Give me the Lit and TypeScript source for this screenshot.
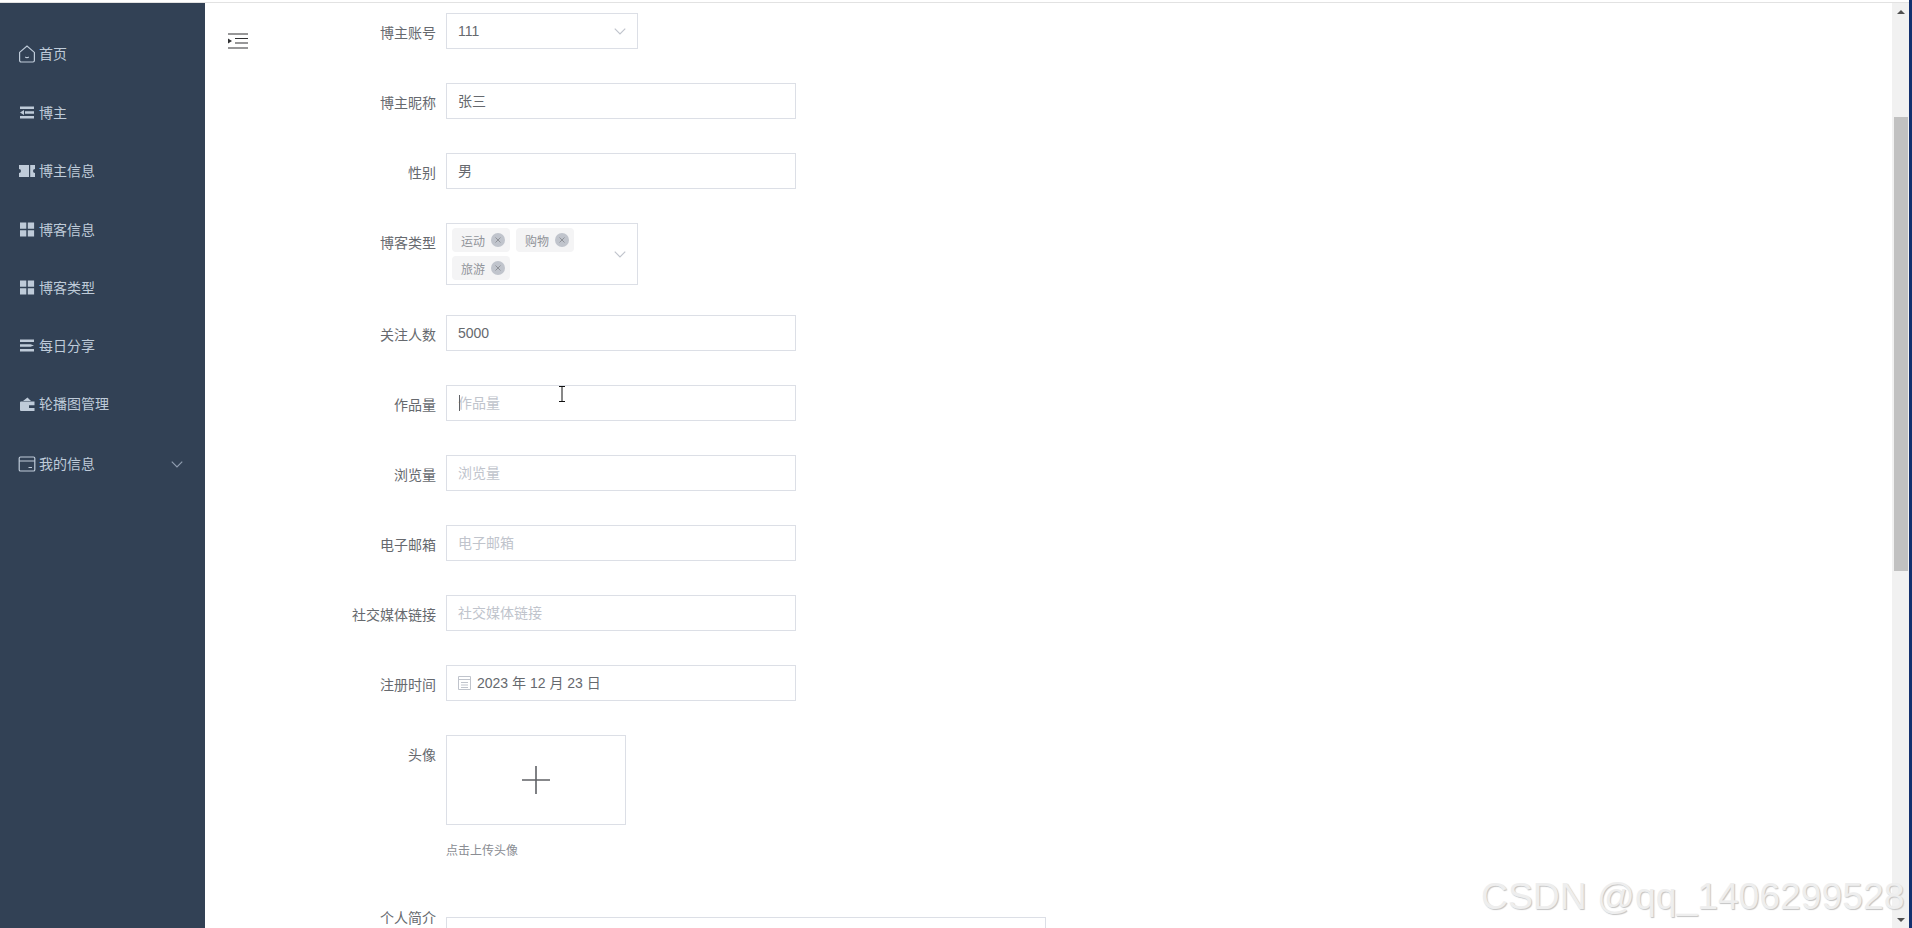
import { LitElement, html, css, svg } from "lit";
import { customElement } from "lit/decorators.js";

const stroke = (d: string) => svg`<path d=${d} fill="none" stroke="currentColor" stroke-width="1.2"/>`;
const fill = (d: string) => svg`<path d=${d} fill="currentColor"/>`;

const icons: Record<string, unknown> = {
  home: svg`${stroke("M1.6 7.4 9 1l7.4 6.4v8.2a1.4 1.4 0 0 1-1.4 1.4H3a1.4 1.4 0 0 1-1.4-1.4z")}${stroke("M7.2 12q1.8 1.3 3.6 0")}`,
  unfold: fill("M2 2.5h14v2.6H2zM7 7.2h9v2.6H7zM2 11.9h14v2.6H2zM2 8.5l4-2.4v4.8z"),
  ticket: fill("M1 3h16v4a2 2 0 0 0 0 4v4H1v-4a2 2 0 0 0 0-4zM11 3v12h1.2V3z"),
  grid: fill("M2 1.5h6.3v6.3H2zM9.8 1.5h6.3v6.3H9.8zM2 9.3h6.3v6.3H2zM9.8 9.3h6.3v6.3H9.8z"),
  operation: fill("M2 2.5h14v2.6H2zM2 7.2h10.5l3.5 1.3-3.5 1.3H2zM2 11.9h14v2.6H2z"),
  wallet: svg`<path fill-rule="evenodd" fill="currentColor" d="M2 7.5q0-1 1-1h13.500v9.500H3q-1 0-1-1zM5 6l4.500-3.500 2.500 2.500 1 1zM11 10.200h5.500v2.800H11z"/>`,
  card: svg`<rect x="1.2" y="2" width="15.6" height="14" rx="1.300" fill="none" stroke="currentColor" stroke-width="1.200"/>${stroke("M1.200 6h15.600M10.500 12.500h3.500")}`,
};

const menu = [
  { icon: "home", label: "首页" },
  { icon: "unfold", label: "博主" },
  { icon: "ticket", label: "博主信息" },
  { icon: "grid", label: "博客信息" },
  { icon: "grid", label: "博客类型" },
  { icon: "operation", label: "每日分享" },
  { icon: "wallet", label: "轮播图管理" },
  { icon: "card", label: "我的信息", arrow: true },
];

const chevron = svg`<svg class="chev" viewBox="0 0 12 12"><path d="M1.500 4 6 8.500 10.500 4" fill="none" stroke="currentColor" stroke-width="1"/></svg>`;

@customElement("app-root")
export class AppRoot extends LitElement {
  static styles = css`
    :host {
      display: block;
      height: 928px;
      overflow: hidden;
      background: #fff;
      font-family: "Liberation Sans", "Noto Sans CJK SC", sans-serif;
      font-size: 14px;
      color: #66696e;
      position: relative;
    }
    .shell { display: flex; height: 928px; }
    .page { flex: 1; display: flex; flex-direction: column; min-width: 0; }
    .topline { height: 2px; flex: none; background: #fff; border-bottom: 1px solid #e2e2e2; }
    .body { flex: 1; display: flex; min-height: 0; overflow: hidden; }
    .side { width: 205px; flex: none; background: #324155; color: #bfcbd9; padding-top: 22px; box-sizing: border-box; }
    .item { height: 58px; display: flex; align-items: center; padding: 0 20px 0 18px; gap: 3px; }
    .item:nth-child(2) { margin-top: 1px; }
    .item:nth-child(4) { margin-top: 1px; }
    .item:nth-child(8) { margin-top: 2px; }
    .item svg.ic { width: 18px; height: 18px; flex: none; }
    .item .lab { flex: 1; line-height: 20px; }
    .chev { width: 14px; height: 14px; display: block; flex: none; }
    .item .chev { color: #909db0; margin-right: 1px; }
    .main { flex: 1; display: flex; min-width: 0; }
    .fold { width: 135px; flex: none; padding: 30px 0 0 23px; box-sizing: border-box; }
    .fold svg { display: block; width: 20px; height: 16px; }
    .form { flex: 1; padding-top: 9px; }
    .row { display: flex; margin-bottom: 33px; }
    .row.tight { margin-bottom: 29px; }
    .row.up { margin-bottom: 48px; }
    .name { width: 96px; flex: none; text-align: right; line-height: 20px; padding-top: 11px; margin-right: 10px; white-space: nowrap; }
    .field {
      box-sizing: border-box; height: 36px; width: 350px; border: 1px solid #dcdfe6;
      display: flex; align-items: center; padding: 0 11px; line-height: 20px; position: relative; flex: none; margin-top: 1px;
    }
    .field.sel { width: 192px; justify-content: space-between; padding-right: 10px; }
    .field .chev, .tags .chev { color: #c0c4cc; }
    .ph { color: #c0c4cc; }
    .caret { position: absolute; left: 12px; top: 9px; width: 1px; height: 16px; background: #606266; }
    .ibeam { position: absolute; left: 111px; top: 0; width: 8px; height: 16px; display: block; color: #111; }
    .tags { box-sizing: border-box; height: 62px; width: 192px; border: 1px solid #dcdfe6; display: flex; align-items: center; flex: none; margin-top: 1px; padding: 0 10px 0 5px; justify-content: space-between; }
    .taglist { display: flex; flex-wrap: wrap; gap: 4px 6px; width: 135px; }
    .tag { box-sizing: border-box; width: 58px; height: 24px; background: #f4f4f5; border-radius: 4px; color: #909399; font-size: 12px; display: flex; align-items: center; padding-left: 9px; gap: 6px; }
    .x { width: 14px; height: 14px; display: block; }
    .date { padding-left: 11px; gap: 6px; }
    .date svg { width: 13px; height: 14px; color: #c0c4cc; display: block; flex: none; }
    .upcol { flex: none; margin-top: 1px; }
    .upload { box-sizing: border-box; width: 180px; height: 90px; border: 1px solid #dcdfe6; display: flex; align-items: center; justify-content: center; color: #606266; }
    .upload svg { width: 28px; height: 28px; display: block; }
    .hint { font-size: 12px; color: #8a8d93; line-height: 17px; margin-top: 18px; }
    .area { box-sizing: border-box; width: 600px; height: 120px; border: 1px solid #dcdfe6; margin-top: 9px; flex: none; }
    .name.top { padding-top: 0; }
    .sb { width: 17px; flex: none; background: #f1f1f1; display: flex; flex-direction: column; align-items: center; height: 925px; }
    .sb .up-arrow { margin-top: 7px; width: 0; height: 0; border-left: 4px solid transparent; border-right: 4px solid transparent; border-bottom: 4px solid #505050; }
    .sb .thumb { width: 14px; height: 454px; background: #c1c1c1; margin-top: 103px; }
    .sb .spacer { flex: 1; }
    .sb .down-arrow { margin-bottom: 6px; width: 0; height: 0; border-left: 4px solid transparent; border-right: 4px solid transparent; border-top: 4px solid #505050; }
    .edge { width: 3px; flex: none; background: #12306f; }
    .wm {
      position: absolute; left: 1481px; top: 873px; font-size: 37.3px; line-height: 46px; white-space: nowrap;
      font-family: "Liberation Sans", sans-serif; color: #eeeeee; text-shadow: 1px 1px 1px #c4c4c4;
    }
  `;

  private rowField(label: string, value: string, ph = false, extra: unknown = null) {
    return html`<div class="row">
      <div class="name">${label}</div>
      <div class="field"><span class=${ph ? "ph" : ""}>${value}</span>${extra}</div>
    </div>`;
  }

  private tag(t: string) {
    return html`<div class="tag">${t}
      <svg class="x" viewBox="0 0 14 14"><circle cx="7" cy="7" r="7" fill="#c0c4cc"/><path d="M4.500 4.500l5 5m0-5-5 5" stroke="#8f9298" stroke-width="1"/></svg>
    </div>`;
  }

  render() {
    return html`<div class="shell">
      <div class="page">
        <div class="topline"></div>
        <div class="body">
          <nav class="side">
            ${menu.map(
              (m) => html`<div class="item">
                <svg class="ic" viewBox="0 0 18 18">${icons[m.icon]}</svg>
                <span class="lab">${m.label}</span>
                ${m.arrow ? chevron : null}
              </div>`
            )}
          </nav>
          <div class="main">
            <div class="fold">
              <svg viewBox="0 0 20 16">
                <path d="M0 1h20M7 5.500h13M7 10h13M0 15h20" stroke="#303133" stroke-width="1.200" fill="none"/>
                <path d="M0 5.500l4 2.500-4 2.500z" fill="#303133"/>
              </svg>
            </div>
            <div class="form">
              <div class="row">
                <div class="name">博主账号</div>
                <div class="field sel"><span>111</span>${chevron}</div>
              </div>
              ${this.rowField("博主昵称", "张三")}
              ${this.rowField("性别", "男")}
              <div class="row tight">
                <div class="name">博客类型</div>
                <div class="tags">
                  <div class="taglist">${["运动", "购物", "旅游"].map((t) => this.tag(t))}</div>
                  ${chevron}
                </div>
              </div>
              ${this.rowField("关注人数", "5000")}
              ${this.rowField(
                "作品量",
                "作品量",
                true,
                html`<i class="caret"></i>
                  <svg class="ibeam" viewBox="0 0 8 16"><path d="M1 .5h6M4 .5v15M1 15.500h6" stroke="currentColor" fill="none"/></svg>`
              )}
              ${this.rowField("浏览量", "浏览量", true)}
              ${this.rowField("电子邮箱", "电子邮箱", true)}
              ${this.rowField("社交媒体链接", "社交媒体链接", true)}
              <div class="row">
                <div class="name">注册时间</div>
                <div class="field date">
                  <svg viewBox="0 0 13 14"><path d="M.5 .5h12v13H.5zM.5 3.500h12M3 6.500h7M3 9h7M3 11.500h7" fill="none" stroke="currentColor"/></svg>
                  <span>2023 年 12 月 23 日</span>
                </div>
              </div>
              <div class="row up">
                <div class="name">头像</div>
                <div class="upcol">
                  <div class="upload">
                    <svg viewBox="0 0 28 28"><path d="M14 0v28M0 14h28" stroke="currentColor" stroke-width="1.600"/></svg>
                  </div>
                  <div class="hint">点击上传头像</div>
                </div>
              </div>
              <div class="row">
                <div class="name top">个人简介</div>
                <div class="area"></div>
              </div>
            </div>
          </div>
          <div class="sb">
            <div class="up-arrow"></div>
            <div class="thumb"></div>
            <div class="spacer"></div>
            <div class="down-arrow"></div>
          </div>
        </div>
      </div>
      <div class="edge"></div>
      <div class="wm">CSDN @qq_1406299528</div>
    </div>`;
  }
}
